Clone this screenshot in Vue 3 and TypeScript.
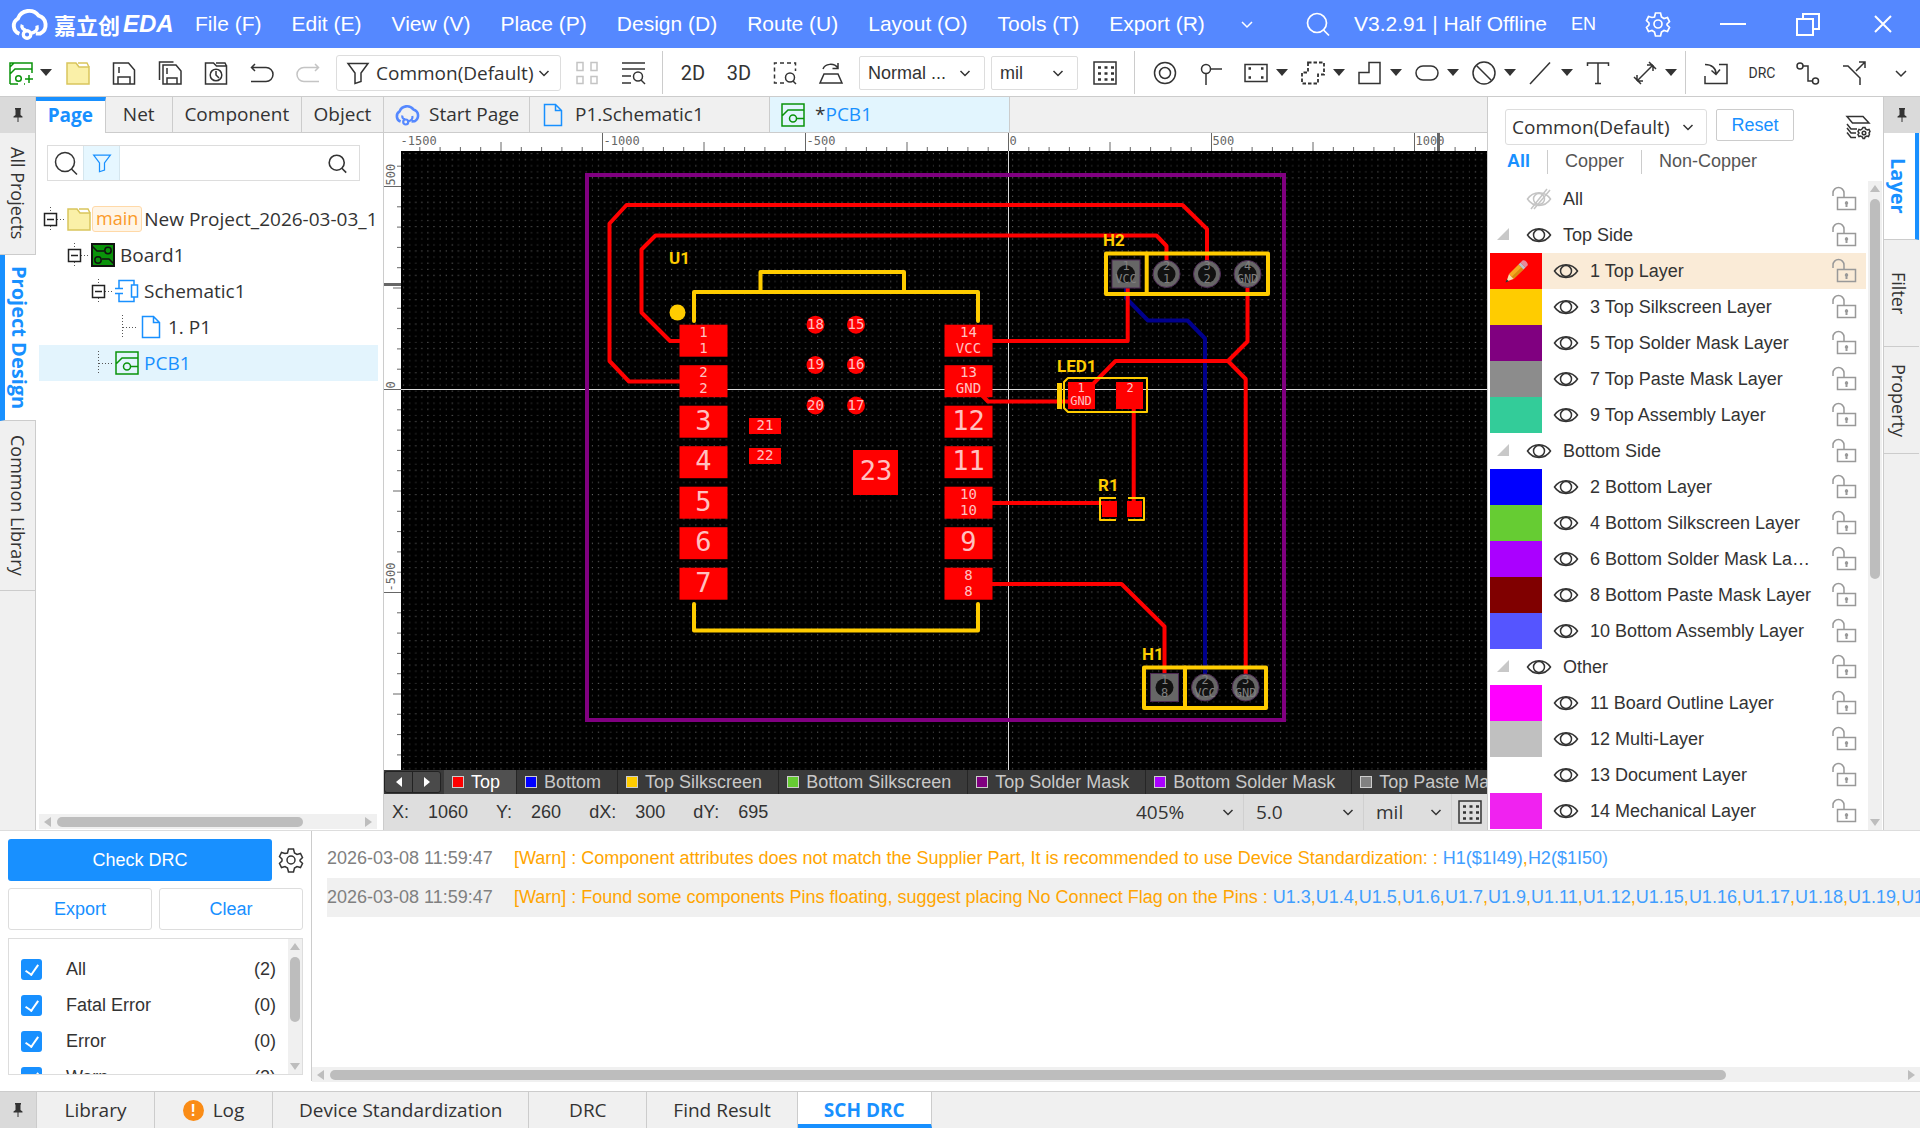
<script setup lang="ts">
import { h, ref } from 'vue'

const icons: Record<string, string> = {
  cloud: '<path stroke-width="2.600" d="M5.600 18.500A5.600 5.600 0 0 1 4.600 8.400A8 8 0 0 1 18.400 6.400A6.400 6.400 0 0 1 19.500 18.300L16.500 18.400"/><circle stroke-width="2.200" cx="10.700" cy="19" r="2.500"/><path stroke-width="2.200" d="M7.500 12.500a2.500 2.500 0 0 0 2.700 3.500M13 18.300c3.600-.7 5-2.600 4.300-5.300"/>',
  newpcb: '<path d="M1 23V6l4-4h18v10M1 13l5-5h17M1 23h8M1 23V2h22"/><circle cx="9.500" cy="17.500" r="2.800"/><path d="M15 23h1M20 14v8M16 18h8"/>',
  folder: '<path fill="#faf0a8" stroke="#d9c55c" d="M1 23V2h9l3 4h10v17z"/><path stroke="#d9c55c" d="M12 2h9l2 4"/>',
  save: '<path d="M1.500 2h15l6 7v14h-21zM6 23v-7h12v7M7 6v6"/>',
  saveall: '<path d="M1.500 19V1h14M5 4h13l5 6v13H5zM9 23v-6h10v6M9 7v6"/>',
  history: '<path d="M1.500 23V2h8l3 3h10v18zM12 2h9l1.500 3"/><circle cx="12" cy="14" r="5.800"/><path d="M12 10v4l3 3"/>',
  undo: '<path d="M5 3L1.500 6.500 5 10M1.500 6.500H16a7 7 0 0 1 0 14H1"/>',
  redo: '<path d="M19 3l3.500 3.500L19 10M22.500 6.500H8a7 7 0 0 0 0 14h15"/>',
  funnel: '<path d="M2 2.500h20l-7 9.500v8.500l-6 2V12z"/>',
  four: '<path d="M2 1.500h6v8H2zM16 1.500h6v8h-6zM2 15.500h6v7H2zM16 15.500h6v7h-6z"/>',
  find: '<path d="M1 2h23M1 8h23M1 15h9M1 22h9"/><circle cx="17" cy="15.500" r="4.500"/><path d="M20 19l4 4"/>',
  zoomsel: '<path stroke-dasharray="4 3" d="M11 22H1.500V2h21v8"/><circle cx="17" cy="16.500" r="4.500"/><path d="M20 20l3 3"/>',
  flip: '<path d="M5 13h14l4 9H1zM4 8c2-5.500 11-6.500 15-1M19 2v5.500h-5.500"/>',
  dots: '<path d="M1 1h22v22H1z"/><path stroke-width="2.400" stroke-dasharray="3 3.500" d="M5 6.500h16M5 12.500h16M5 18.500h16"/>',
  pad: '<circle cx="12" cy="12" r="10.500"/><circle cx="12" cy="12" r="5.500"/>',
  via: '<circle cx="7" cy="8" r="4.500"/><path d="M11.500 8H23M7 12.500V24"/>',
  rectpad: '<path d="M1 3.500h22v17H1z"/><path stroke-width="2.500" d="M4.500 7.500H7M17 7.500h2.500M4.500 16.500H7M17 16.500h2.500"/>',
  dashpoly: '<path stroke-width="1.800" stroke-dasharray="3.500 2" d="M7 1.500h16v12h-6v9H1v-11h6z"/>',
  poly: '<path d="M11 1.500h11v21H1v-11h10z"/>',
  round: '<rect x="1" y="5" width="22" height="14" rx="7"/>',
  ban: '<circle cx="12" cy="12" r="11"/><path d="M4.500 4.500l15 15"/>',
  line: '<path d="M1 23L21 1.500"/>',
  text: '<path d="M1.500 5V2h21v3M12 2v20.500M9 22.500h6"/>',
  dim: '<path d="M4 20L20 4M1 16l7 7M16 1l7 7M4 20v-6M4 20h6M20 4v6M20 4h-6"/>',
  import: '<path d="M1 15v7.500h22v-19h-8M1 3.500c7 0 11 4 11 9M7.500 9.500l4.500 4 4-5"/>',
  route: '<circle cx="4" cy="5" r="3"/><circle cx="19.500" cy="20" r="3"/><path d="M7 5h5v15h4.500"/>',
  fork: '<path d="M1 5h5l12 12v7M14 10l9-9M17 1h6v6"/>',
  search: '<circle cx="11" cy="11" r="9.500"/><path d="M17.500 18l5.500 5.500"/>',
  gear: '<circle cx="12" cy="12" r="4"/><path d="M9.500 1h5l1 4 2.500 1.500 3.500-1 2 4-2.500 2.500v1l2.500 2.500-2 4-3.500-1-2.500 1.500-1 4h-5l-1-4L6 18.500l-3.500 1-2-4L3 13v-2L.5 8.500l2-4 3.500 1L8.500 5z"/>',
  min: '<path stroke-width="2" d="M-1 12h26"/>',
  restore: '<path stroke-width="2" d="M1 7h16v16H1zM7 7V2h16v15h-6"/>',
  close: '<path stroke-width="2" d="M4 4l16 16M20 4L4 20"/>',
  down: '<path d="M7 10l5 5 5-5"/>',
  chev: '<path d="M7.500 10l4.500 4.500 4.500-4.500"/>',
  pin: '<path fill="currentColor" stroke="none" d="M9 5h6v1.500h-.5V12l2 1.500v1h-4V19h-1v-4.500h-4v-1l2-1.500V6.500H9z"/>',
  file: '<path d="M3.500 1.500h11l6 6v15h-17zM14.500 1.500v6h6"/>',
  pcb: '<path d="M1 1h22v22H1zM1 13l6-6h16"/><circle cx="12" cy="15.500" r="3.500"/><path d="M15.500 15.500H23"/>',
  board: '<rect x="1" y="1" width="22" height="22" fill="#0a930a" stroke="#111" stroke-width="2"/><g stroke="#111"><path d="M1 3l5 5h7M23 21l-5-5h-7"/><circle cx="17" cy="7.500" r="3.200"/><circle cx="7" cy="17" r="3.200"/></g>',
  sch: '<path d="M4 9V1.500h15V6M4 15v7.500h15V18M0 9.500h8M0 14.500h8M16.500 6h6v12h-6z"/>',
  eye: '<path d="M.5 12C6 3.500 18 3.500 23.500 12 18 20.500 6 20.500.5 12z"/><circle cx="12" cy="12" r="5.500"/>',
  eyeoff: '<path d="M.5 12C6 3.500 18 3.500 23.500 12 18 20.500 6 20.500.5 12z"/><circle cx="12" cy="12" r="5.500"/><path d="M4 22L20 2M7 22L23 3"/>',
  lock: '<path d="M5.500 10.500h18v12h-18zM1 9V6a5.500 5.500 0 0 1 11 0v4.500"/><path fill="currentColor" stroke="none" d="M14.500 14a2 2 0 0 1 1 3.500V20h-2v-2.500a2 2 0 0 1 1-3.500z"/>',
  layers: '<path d="M1 1.500h16l6 6.500H6.500zM1 9l4 5h6M1 13l4 5h5M1 17.500l4 5h5"/><circle cx="18" cy="18" r="1.800"/><path d="M17 12.500h2l.5 1.500 2 1 1.500-.5 1 2-1 1.500.5 1-1 2.500-1.500-.5-2 1-.5 1.500h-1.500l-.5-1.500-2-1-1.500.5-1-2 1-1.500-1-1.500 1-2 1.500.5 1.500-1z"/>',
  tri: '<path fill="#c8c8c8" stroke="none" d="M18 5v12H6z"/>',
  pencil: '<path fill="#f6a821" stroke="none" d="M5 15L14.500 5.500l5 5L9.500 20z"/><path fill="#d98a10" stroke="none" d="M7.500 18l10-9.800 2 2L9.500 20z"/><path fill="#e58a9a" stroke="none" d="M16.500 3.500l2-2c2-1.500 6.500 3 5 5l-2 2z"/><path fill="#b9c4cc" stroke="none" d="M14.500 5.500l2-2 5 5-2 2z"/><path fill="#f8deb0" stroke="none" d="M5 15l4.500 5-7 2.500z"/><path fill="#333" stroke="none" d="M1.500 23.500l1.200-3.300 2.100 2.100z"/>',
}
const Icon = (p: { name: string }) =>
  h('svg', { class: 'ic', viewBox: '0 0 24 24', innerHTML: icons[p.name], 'aria-hidden': 'true' })
Icon.props = ['name']

const menus = ['File (F)', 'Edit (E)', 'View (V)', 'Place (P)', 'Design (D)', 'Route (U)', 'Layout (O)', 'Tools (T)', 'Export (R)']
const fileTools = ['folder', 'save', 'saveall', 'history', 'undo', 'redo']
const drawTools = ['rectpad', 'dashpoly', 'poly', 'round', 'ban', 'line']

const treeNodes = [
  { level: 0, icon: 'folder', text: 'New Project_2026-03-03_1', tag: 'main', open: true },
  { level: 1, icon: 'board', text: 'Board1', open: true },
  { level: 2, icon: 'sch', text: 'Schematic1', open: true },
  { level: 3, icon: 'file', text: '1. P1' },
  { level: 2, icon: 'pcb', text: 'PCB1', active: true },
]

interface LayerRow { text: string; color?: string; kind: 'all' | 'group' | 'layer'; active?: boolean }
const layers: LayerRow[] = [
  { text: 'All', kind: 'all' },
  { text: 'Top Side', kind: 'group' },
  { text: '1 Top Layer', color: '#ff0000', kind: 'layer', active: true },
  { text: '3 Top Silkscreen Layer', color: '#ffcc00', kind: 'layer' },
  { text: '5 Top Solder Mask Layer', color: '#800080', kind: 'layer' },
  { text: '7 Top Paste Mask Layer', color: '#8c8c8c', kind: 'layer' },
  { text: '9 Top Assembly Layer', color: '#33cc99', kind: 'layer' },
  { text: 'Bottom Side', kind: 'group' },
  { text: '2 Bottom Layer', color: '#0000ff', kind: 'layer' },
  { text: '4 Bottom Silkscreen Layer', color: '#66cc33', kind: 'layer' },
  { text: '6 Bottom Solder Mask Layer', color: '#aa00ff', kind: 'layer' },
  { text: '8 Bottom Paste Mask Layer', color: '#800000', kind: 'layer' },
  { text: '10 Bottom Assembly Layer', color: '#5555ff', kind: 'layer' },
  { text: 'Other', kind: 'group' },
  { text: '11 Board Outline Layer', color: '#ff00ff', kind: 'layer' },
  { text: '12 Multi-Layer', color: '#c0c0c0', kind: 'layer' },
  { text: '13 Document Layer', color: '#ffffff', kind: 'layer' },
  { text: '14 Mechanical Layer', color: '#f022f0', kind: 'layer' },
]

const layerTabs = [
  { text: 'Top', color: '#ff0000' },
  { text: 'Bottom', color: '#0000ff' },
  { text: 'Top Silkscreen', color: '#ffcc00' },
  { text: 'Bottom Silkscreen', color: '#66cc33' },
  { text: 'Top Solder Mask', color: '#800080' },
  { text: 'Bottom Solder Mask', color: '#aa00ff' },
  { text: 'Top Paste Mask', color: '#808080' },
]

const coords = [['X:', '1060'], ['Y:', '260'], ['dX:', '300'], ['dY:', '695']]

const filters = ref([
  { text: 'All', count: 2, on: true },
  { text: 'Fatal Error', count: 0, on: true },
  { text: 'Error', count: 0, on: true },
  { text: 'Warn', count: 2, on: true },
])

const logs = [
  { msg: '[Warn] : Component attributes does not match the Supplier Part, It is recommended to use Device Standardization: : ', links: ['H1($1I49)', 'H2($1I50)'] },
  { msg: '[Warn] : Found some components Pins floating, suggest placing No Connect Flag on the Pins : ', links: [3, 4, 5, 6, 7, 9, 11, 12, 15, 16, 17, 18, 19, 20, 21].map(n => `U1.${n}`) },
]

/* rulers: 500 mil is 203 px, the origin sits at 1008,389 */
const step = 20.3
const hTicks = Array.from({ length: 54 }, (_, k) => k - 30).map(i => ({ p: 1008.5 + i * step, l: i % 10 === 0 ? 18 : i % 5 === 0 ? 9 : 4, v: i * 50 }))
const vTicks = Array.from({ length: 31 }, (_, k) => k - 11).map(i => ({ p: 389.5 + i * step, l: i % 10 === 0 ? 17 : i % 5 === 0 ? 8 : 4, v: -i * 50 }))

const padY = (i: number) => 324.700 + i * 40.500
const leftPads = [['1', '1'], ['2', '2'], ['3'], ['4'], ['5'], ['6'], ['7']]
const rightPads = [['14', 'VCC'], ['13', 'GND'], ['12'], ['11'], ['10', '10'], ['9'], ['8', '8']]
const modulePads = [
  ...leftPads.map((t, i) => ({ x: 679.500, y: padY(i), t })),
  ...rightPads.map((t, i) => ({ x: 944.500, y: padY(i), t })),
]
const dotsPads = [[815.500, 324.700, '18'], [856, 324.700, '15'], [815.500, 365, '19'], [856, 365, '16'], [815.500, 405.500, '20'], [856, 405.500, '17']] as const
const holes = [
  { x: 1126, y: 274, sq: true, t: ['1', 'VCC'] },
  { x: 1166.500, y: 274, t: ['2', '1'] },
  { x: 1207, y: 274, t: ['3', '2'] },
  { x: 1247.500, y: 274, t: ['4', 'GND'] },
  { x: 1164.500, y: 687.500, sq: true, t: ['1', '8'] },
  { x: 1205, y: 687.500, t: ['2', 'VCC'] },
  { x: 1245.700, y: 687.500, t: ['3', 'GND'] },
]
</script>

<template>
  <div class="app">
    <header class="menubar">
      <div class="brand">
        <Icon name="cloud" />
        <span class="brand-cn">嘉立创</span><span class="brand-en">EDA</span>
      </div>
      <nav class="menus">
        <button v-for="m in menus" :key="m">{{ m }}</button>
        <button aria-label="More"><Icon name="down" /></button>
      </nav>
      <div class="win">
        <button aria-label="Search"><Icon name="search" /></button>
        <span class="ver">V3.2.91 | Half Offline</span>
        <button class="wbtn lang">EN</button>
        <button class="wbtn" aria-label="Settings"><Icon name="gear" /></button>
        <button class="wbtn" aria-label="Minimize"><Icon name="min" /></button>
        <button class="wbtn" aria-label="Restore"><Icon name="restore" /></button>
        <button class="wbtn" aria-label="Close"><Icon name="close" /></button>
      </div>
    </header>

    <div class="toolbar">
      <button class="caret green" aria-label="New"><Icon name="newpcb" /><i class="car"></i></button>
      <div class="tools">
        <button v-for="t in fileTools" :key="t" :class="{ dis: t === 'redo' }" :aria-label="t"><Icon :name="t" /></button>
      </div>
      <label class="dd dd-filter">
        <Icon name="funnel" />
        <select aria-label="Filter"><option>Common(Default)</option></select>
        <Icon name="chev" class="arr" />
      </label>
      <div class="tools">
        <button class="dis" aria-label="Array"><Icon name="four" /></button>
        <button aria-label="Find"><Icon name="find" /></button>
      </div>
      <i class="sep"></i>
      <div class="tools">
        <button class="dimtext">2D</button>
        <button class="dimtext">3D</button>
        <button aria-label="Zoom"><Icon name="zoomsel" /></button>
        <button aria-label="Flip"><Icon name="flip" /></button>
      </div>
      <label class="dd dd-mode"><select aria-label="Mode"><option>Normal ...</option></select><Icon name="chev" class="arr" /></label>
      <label class="dd dd-unit"><select aria-label="Unit"><option>mil</option></select><Icon name="chev" class="arr" /></label>
      <button class="gridbtn" aria-label="Grid"><Icon name="dots" /></button>
      <i class="sep"></i>
      <div class="tools">
        <button aria-label="Pad"><Icon name="pad" /></button>
        <button aria-label="Via"><Icon name="via" /></button>
      </div>
      <div class="shapes">
        <button v-for="t in drawTools" :key="t" class="caret" :aria-label="t"><Icon :name="t" /><i class="car"></i></button>
      </div>
      <div class="tools">
        <button aria-label="Text"><Icon name="text" /></button>
        <button class="caret" aria-label="Dimension"><Icon name="dim" /><i class="car"></i></button>
      </div>
      <i class="sep last"></i>
      <div class="tools">
        <button aria-label="Import"><Icon name="import" /></button>
        <button class="drc">DRC</button>
        <button aria-label="Route"><Icon name="route" /></button>
        <button aria-label="Fork"><Icon name="fork" /></button>
      </div>
      <button class="more" aria-label="More tools"><Icon name="down" /></button>
    </div>

    <main class="main">
      <aside class="rail left">
        <button class="pin" aria-label="Pin"><Icon name="pin" /></button>
        <button class="vt a">All Projects</button>
        <button class="vt b on">Project Design</button>
        <button class="vt c">Common Library</button>
      </aside>

      <section class="project">
        <nav class="ptabs">
          <button class="on">Page</button><button>Net</button><button>Component</button><button>Object</button>
        </nav>
        <div class="searchbox">
          <button aria-label="Find"><Icon name="search" /></button>
          <button class="flt" aria-label="Filter"><Icon name="funnel" /></button>
          <input type="text" aria-label="Search project" />
          <button class="go" aria-label="Go"><Icon name="search" /></button>
        </div>
        <ul class="tree">
          <li v-for="n in treeNodes" :key="n.text" :class="{ act: n.active }" :style="{ paddingLeft: 4 + n.level * 24 + 'px' }">
            <svg class="exp" viewBox="0 0 22 24">
              <template v-if="n.open">
                <path class="dot" d="M7.500 0v6M7.500 19v5M14 12.500h7" />
                <path class="box" d="M1.500 6.500h12v12h-12zM4 12.500h7" />
              </template>
              <path v-else class="dot" d="M7.500 0v24M8 12.500h13" />
            </svg>
            <Icon :name="n.icon" :class="n.icon" />
            <span v-if="n.tag" class="tag">{{ n.tag }}</span>
            <span class="lbl" :class="{ tagged: n.tag }">{{ n.text }}</span>
          </li>
        </ul>
        <div class="hscroll"><i class="al"></i><b></b><i class="ar"></i></div>
      </section>

      <section class="editor">
        <nav class="docs">
          <button class="start"><Icon name="cloud" /><span>Start Page</span></button>
          <button class="sheet"><Icon name="file" /><span>P1.Schematic1</span></button>
          <button class="board on"><Icon name="pcb" /><span>*<em>PCB1</em></span></button>
        </nav>
        <svg class="stage">
          <defs>
            <pattern id="grid" x="401" y="151" width="24.360" height="24.360" patternUnits="userSpaceOnUse">
              <template v-for="r in 4" :key="r">
                <rect v-for="c in 4" :key="c" :x="c * 6.090 - 4" :y="r * 6.090 - 4" width="1" height="1" :fill="c === 1 || r === 1 ? '#808080' : '#505050'" />
              </template>
            </pattern>
          </defs>
          <g transform="translate(-384 -133)">
            <g class="ruler">
              <template v-for="t in hTicks" :key="t.v">
                <path :d="`M${t.p} ${151 - t.l}V151`" />
                <text v-if="t.l === 18" :x="t.p + 1" y="145">{{ t.v }}</text>
              </template>
              <template v-for="t in vTicks" :key="t.v">
                <path :d="`M${401 - t.l} ${t.p}H401`" />
                <text v-if="t.l === 17" :transform="`translate(395 ${t.p - 1}) rotate(-90)`">{{ t.v }}</text>
              </template>
              <path class="cur" d="M1438.500 133v18M384 284.500h17" />
            </g>
            <rect x="384" y="133" width="17" height="18" fill="#fff" />
            <rect x="401" y="151" width="100%" height="100%" fill="#000" />
            <rect x="401" y="151" width="100%" height="100%" fill="url(#grid)" />
            <path class="axis" d="M1008.500 151v700M401 389.500h3000" />

            <path class="trk bot" d="M1126 288v10L1148 320.500H1187.500L1205 338.500V675" />
            <rect class="outline" x="587" y="175" width="697" height="545" />
            <g class="trk">
              <path d="M680 381.500H629L609.500 361V223.500L626.500 205H1182.500L1207 229V262" />
              <path d="M680 341H670L641.500 312.500V249.500L655.500 235.500H1156.500L1166.500 246V262" />
              <path d="M992 341H1127.700V286" />
              <path d="M1247.500 286V341.500L1228 361L1245.700 379V676" />
              <path d="M1228 361H1115.500L1092 385" />
              <path d="M978 391L988 401.500H1070" />
              <path d="M1133.700 400V506" />
              <path d="M992 503H1106" />
              <path d="M992 584H1121.500L1164.500 626.500V676" />
            </g>
            <g class="silk">
              <path d="M694 321V292H978V321M760.500 292V272H904V292M694 604V630.500H978V604" />
              <rect x="1106" y="253.500" width="162" height="40.500" />
              <path d="M1146.700 253.500V294M1185 667.500V708" />
              <rect x="1144" y="667.500" width="122" height="40.500" />
            </g>
            <circle cx="677.500" cy="312.500" r="8" fill="#fc0" />
            <g class="pads">
              <template v-for="p in modulePads" :key="`${p.x}-${p.y}`">
                <rect :x="p.x" :y="p.y" width="48" height="32" />
                <text v-if="p.t.length === 1" class="big" :x="p.x + 24" :y="p.y + 24">{{ p.t[0] }}</text>
                <template v-else>
                  <text :x="p.x + 24" :y="p.y + 12">{{ p.t[0] }}</text>
                  <text :x="p.x + 24" :y="p.y + 28">{{ p.t[1] }}</text>
                </template>
              </template>
              <template v-for="d in dotsPads" :key="d[2]">
                <circle :cx="d[0]" :cy="d[1]" r="9" />
                <text :x="d[0]" :y="d[1] + 4">{{ d[2] }}</text>
              </template>
              <rect x="749" y="418" width="32" height="16" /><text x="765" y="430">21</text>
              <rect x="749" y="448" width="32" height="16" /><text x="765" y="460">22</text>
              <rect x="853" y="450" width="45" height="45" /><text class="big" x="876" y="480">23</text>
              <rect x="1068" y="382" width="27" height="27" />
              <rect x="1116" y="382" width="27" height="27" />
              <text class="sm" x="1081" y="392">1</text><text class="sm" x="1081" y="405">GND</text>
              <text class="sm" x="1130" y="392">2</text>
              <path d="M1102 501h15v16h-15zM1127 501h15v16h-15z" />
            </g>
            <g class="silk thin">
              <path d="M1068 378H1147V412H1068L1064 408V382z" />
              <path d="M1116 498H1100V520H1116M1128 498H1144V520H1128" />
            </g>
            <path d="M1057 383h5v26h-5z" fill="#fc0" />
            <g class="holes">
              <template v-for="o in holes" :key="`${o.x}-${o.y}`">
                <rect v-if="o.sq" :x="o.x - 14" :y="o.y - 14" width="28" height="28" />
                <circle v-else :cx="o.x" :cy="o.y" r="13.500" />
                <circle class="hole" :cx="o.x" :cy="o.y" r="9" />
                <text :x="o.x" :y="o.y - 4">{{ o.t[0] }}</text>
                <text :x="o.x" :y="o.y + 9">{{ o.t[1] }}</text>
              </template>
            </g>
            <g class="names">
              <text x="669" y="264">U1</text><text x="1103" y="246">H2</text><text x="1057" y="372">LED1</text>
              <text x="1098" y="491">R1</text><text x="1142" y="660">H1</text>
            </g>
          </g>
        </svg>
        <div class="ltabs">
          <div class="nav"><button aria-label="Previous"><i class="pl"></i></button><button aria-label="Next"><i class="pr"></i></button></div>
          <button v-for="(t, i) in layerTabs" :key="t.text" class="lt" :class="{ on: i === 0 }"><i :style="{ background: t.color }"></i>{{ t.text }}</button>
        </div>
        <div class="status">
          <dl><div v-for="c in coords" :key="c[0]"><dt>{{ c[0] }}</dt><dd>{{ c[1] }}</dd></div></dl>
          <label class="dd wide"><select aria-label="Zoom level"><option>405%</option></select><Icon name="chev" class="arr" /></label>
          <label class="dd wide"><select aria-label="Grid size"><option>5.0</option></select><Icon name="chev" class="arr" /></label>
          <label class="dd"><select aria-label="Canvas unit"><option>mil</option></select><Icon name="chev" class="arr" /></label>
          <button aria-label="Grid"><Icon name="dots" /></button>
        </div>
      </section>

      <section class="layerpanel">
        <div class="lhead">
          <label class="dd"><select aria-label="Layer preset"><option>Common(Default)</option></select><Icon name="chev" class="arr" /></label>
          <button class="reset">Reset</button>
          <button class="mgr" aria-label="Layer manager"><Icon name="layers" /></button>
        </div>
        <nav class="lfilter"><button class="on">All</button><button>Copper</button><button>Non-Copper</button></nav>
        <div class="lbody">
          <ul>
            <li v-for="l in layers" :key="l.text" :class="[l.kind, { act: l.active }]">
              <span v-if="l.kind === 'layer'" class="sw" :style="{ background: l.color }"><Icon v-if="l.active" name="pencil" /></span>
              <span v-else class="tri"><Icon v-if="l.kind === 'group'" name="tri" /></span>
              <Icon :name="l.kind === 'all' ? 'eyeoff' : 'eye'" class="eye" />
              <span class="nm">{{ l.text }}</span>
              <Icon name="lock" class="lock" />
            </li>
          </ul>
          <div class="vscroll"><i class="au"></i><b></b><i class="ad"></i></div>
        </div>
      </section>

      <aside class="rail right">
        <button class="pin" aria-label="Pin"><Icon name="pin" /></button>
        <button class="vt on">Layer</button>
        <button class="vt">Filter</button>
        <button class="vt">Property</button>
      </aside>
    </main>

    <section class="drcpanel">
      <div class="ctrl">
        <div class="r1"><button class="check">Check DRC</button><button class="cfg" aria-label="Settings"><Icon name="gear" /></button></div>
        <div class="r2"><button>Export</button><button>Clear</button></div>
        <div class="fbox">
          <div class="flist">
            <label v-for="f in filters" :key="f.text">
              <input v-model="f.on" type="checkbox" /><span>{{ f.text }}</span><span class="cnt">({{ f.count }})</span>
            </label>
          </div>
          <div class="vscroll"><i class="au"></i><b></b><i class="ad"></i></div>
        </div>
      </div>
      <div class="log">
        <div class="lines">
          <p v-for="(l, i) in logs" :key="i">
            <time>2026-03-08 11:59:47</time>
            <span class="msg">{{ l.msg }}<template v-for="(k, j) in l.links" :key="k"><template v-if="j">,</template><a href="#">{{ k }}</a></template></span>
          </p>
        </div>
        <div class="hscroll"><i class="al"></i><b></b><i class="ar"></i></div>
      </div>
    </section>

    <footer class="btabs">
      <button class="pin" aria-label="Pin"><Icon name="pin" /></button>
      <button>Library</button>
      <button><span class="warn">!</span>Log</button>
      <button>Device Standardization</button>
      <button>DRC</button>
      <button>Find Result</button>
      <button class="on">SCH DRC</button>
    </footer>
  </div>
</template>

<style>
body { margin: 0; overflow: hidden; }
</style>

<style scoped>
.app { height: 100vh; display: flex; flex-direction: column; background: #fff; color: #333; font: 18px/24px "Liberation Sans", Arial, sans-serif; --ui: "Open Sans", "Noto Sans", sans-serif; --blue: #1890ff; }
* { box-sizing: border-box; }
button { border: 0; background: none; padding: 0; margin: 0; font: inherit; color: inherit; white-space: nowrap; cursor: pointer; }
ul, dl, dd, p { margin: 0; padding: 0; list-style: none; }
.ic { display: block; width: 24px; height: 24px; flex: none; fill: none; stroke: currentColor; stroke-width: 1.5; overflow: visible; }

.menubar { flex: none; height: 48px; display: flex; align-items: center; background: #5588ff; color: #fff; font-size: 21px; padding-left: 11px; }
.brand { display: flex; align-items: center; width: 184px; height: 48px; }
.brand .ic { width: 36px; height: 36px; margin-right: 7px; }
.brand-cn { font: 700 22px/32px "Noto Sans CJK SC", sans-serif; }
.brand-en { font: italic 700 24px/32px "Liberation Sans", sans-serif; margin-left: 3px; }
.menus { display: flex; gap: 30px; align-items: center; }
.win { margin-left: auto; display: flex; align-items: center; }
.win .ic { stroke-width: 1.7; }
.ver { margin-left: 24px; }
.wbtn { width: 75px; display: flex; justify-content: center; }
.wbtn.lang { width: 73px; font-size: 18px; }

.toolbar { flex: none; height: 49px; display: flex; align-items: center; border-bottom: 1px solid #ccc; padding: 1px 0 0 9px; }
.tools { display: flex; gap: 22px; align-items: center; }
.shapes { display: flex; gap: 13px; margin: 0 13px 0 21px; }
.shapes + .tools { gap: 23px; }
.caret { display: flex; align-items: center; gap: 8px; }
.toolbar > .caret { margin-right: 14px; gap: 7px; }
.green .ic { color: #0a930a; }
.car { border: 6px solid transparent; border-top: 7px solid #333; border-bottom: 0; }
.dis { color: #c4c4c4; }
.sep { width: 1px; height: 43px; background: #ccc; margin: 0 18px 0 17px; flex: none; }
.sep.last { margin-left: 8px; }
.dimtext { width: 24px; font: 20px/24px Roboto, sans-serif; display: flex; justify-content: center; }
.drc { width: 24px; font: 14px/24px Roboto, sans-serif; display: flex; justify-content: center; }
.more { margin: 0 7px 0 auto; }
.dd { display: flex; align-items: center; position: relative; }
.dd select { appearance: none; border: 0; background: transparent; font: 19px/26px var(--ui); color: inherit; padding: 0; width: 100%; outline: 0; }
.dd .arr { position: absolute; right: 4px; pointer-events: none; }
.toolbar .dd { border: 1px solid #ddd; border-radius: 2px; height: 34px; padding-left: 8px; }
.toolbar .dd-filter { width: 225px; height: 36px; margin: 0 14px 0 16px; padding-left: 9px; gap: 6px; border-radius: 3px; }
.dd-mode { width: 126px; margin: 0 6px 0 16px; }
.dd-unit { width: 87px; }
.dd-mode select, .dd-unit select { font: 18px/24px "Liberation Sans", sans-serif; }
.toolbar .dd-mode .arr, .toolbar .dd-unit .arr { right: 7px; }
.gridbtn { margin-left: 15px; }

.main { flex: 1; min-height: 0; display: flex; border-bottom: 1px solid #ddd; }
.rail { flex: none; width: 36px; background: #f0f0f0; display: flex; flex-direction: column; border-right: 1px solid #ccc; font-family: var(--ui); }
.rail.right { width: 37px; border-left: 1px solid #ccc; border-right: 0; }
.pin { background: #dadada; height: 36px; display: flex; align-items: center; justify-content: center; }
.vt { writing-mode: vertical-rl; width: 35px; border-bottom: 1px solid #ccc; font-size: 18px; line-height: 24px; display: flex; align-items: center; justify-content: center; }
.vt.a { height: 122px; }
.vt.b { height: 166px; }
.vt.c { height: 170px; }
.vt.on { background: #fff; color: var(--blue); font-weight: 700; font-size: 20px; }
.left .on { border-left: 5px solid var(--blue); width: 36px; padding-right: 4px; }
.right .vt { height: 107px; padding-right: 6px; }
.right .on { border-right: 4px solid var(--blue); padding-right: 3px; }

.project { flex: none; width: 348px; display: flex; flex-direction: column; border-right: 1px solid #ccc; min-width: 0; font-family: var(--ui); }
.ptabs { display: flex; height: 36px; background: #f0f0f0; font-size: 19px; }
.ptabs button { border-right: 1px solid #ccc; border-bottom: 1px solid #ccc; flex: 1 1 auto; min-width: 67px; padding: 0 10px 2px; }
.ptabs button:last-child { border-right: 0; }
.ptabs .on { background: #fff; color: var(--blue); font-weight: 700; border-top: 4px solid var(--blue); border-bottom: 0; padding-bottom: 4px; }
.searchbox { display: flex; margin: 12px 23px 20px 11px; height: 36px; border: 1px solid #ddd; }
.searchbox button { width: 35px; display: flex; align-items: center; justify-content: center; }
.searchbox .flt { width: 37px; background: #e6f7ff; color: var(--blue); border: solid #d5e6ee; border-width: 0 1px; }
.searchbox .flt .ic { width: 20px; height: 22px; }
.searchbox .go { width: 44px; }
.searchbox .go .ic { width: 19px; height: 19px; stroke-width: 2; }
.searchbox input { flex: 1; min-width: 0; border: 0; outline: 0; background: transparent; }
.tree { flex: 1; margin: 0 5px 0 3px; overflow: hidden; }
.tree li { height: 36px; display: flex; align-items: center; white-space: nowrap; font-size: 19px; }
.exp { width: 22px; height: 24px; margin-right: 2px; flex: none; fill: none; }
.dot { stroke: #555; stroke-dasharray: 1 2; }
.box { stroke: #222; stroke-width: 1.5; }
.tree .act { background: #e3f4fd; color: var(--blue); }
.file, .sch { color: var(--blue); }
.pcb { color: #0a930a; }
.lbl { margin-left: 5px; padding-bottom: 1px; }
.lbl.tagged { margin-left: 2px; }
.tag { margin-left: 1px; height: 26px; padding: 0 3px; border: 1px solid #ffd9a8; background: #fff5e6; color: #fa9a2a; border-radius: 3px; line-height: 22px; font-size: 18px; }

.hscroll { flex: none; height: 15px; background: #f0f0f0; display: flex; align-items: center; padding: 0 5px; }
.hscroll b { height: 10px; border-radius: 5px; background: #bdbdbd; }
.al, .ar { border: 5px solid transparent; }
.al { border-left: 0; border-right: 7px solid #bdbdbd; }
.ar { border-right: 0; border-left: 7px solid #bdbdbd; margin-left: auto; }
.project .hscroll { margin: 0 6px 1px 3px; }
.project .hscroll b { width: 246px; margin-left: 6px; }
.vscroll { flex: none; width: 14px; background: #f0f0f0; display: flex; flex-direction: column; align-items: center; padding: 4px 0; }
.vscroll b { width: 10px; border-radius: 5px; background: #bdbdbd; margin-top: 7px; }
.au, .ad { border: 5px solid transparent; }
.au { border-top: 0; border-bottom: 7px solid #bdbdbd; }
.ad { border-bottom: 0; border-top: 7px solid #bdbdbd; margin-top: auto; }

.editor { flex: 1; min-width: 0; display: flex; flex-direction: column; }
.docs { flex: none; height: 36px; background: #f0f0f0; display: flex; font: 19px/24px var(--ui); border-bottom: 1px solid #ccc; }
.docs button { display: flex; align-items: center; gap: 10px; padding-left: 11px; border-right: 1px solid #ccc; }
.docs button span { padding-bottom: 2px; }
.docs .start { width: 146px; }
.docs .start .ic { color: #5588ff; }
.docs .sheet, .docs .board { width: 240px; }
.docs .sheet .ic { color: var(--blue); }
.docs .board .ic { color: #0a930a; }
.docs .on { background: #e2f5fe; }
.docs em { font-style: normal; color: var(--blue); }
.stage { flex: 1; min-height: 0; width: 100%; display: block; background: #fff; overflow: hidden; }
.ruler path { stroke: #666; fill: none; }
.ruler .cur { stroke-width: 3; }
.ruler text { font: 12px "DejaVu Sans Mono", monospace; fill: #666; }
.axis { stroke: #ddd; fill: none; }
.trk { stroke: #f00; stroke-width: 4; fill: none; stroke-linejoin: round; }
.trk.bot { stroke: #00008b; }
.outline { stroke: #800080; stroke-width: 4; fill: none; }
.silk { stroke: #fc0; stroke-width: 4; fill: none; stroke-linecap: round; stroke-linejoin: round; }
.silk.thin { stroke-width: 2; stroke-linecap: butt; }
.pads { fill: #f00; }
.pads text { font: 14px "DejaVu Sans Mono", monospace; fill: #ffc0c0; text-anchor: middle; }
.pads .big { font-size: 27px; }
.pads .sm { font-size: 12px; }
.holes { fill: #666; stroke: #4d2a55; stroke-width: 1; }
.holes .hole { fill: #111; stroke: none; }
.holes text { font: 12px "DejaVu Sans Mono", monospace; fill: #808080; stroke: none; text-anchor: middle; }
.names { font: 700 17px Roboto, sans-serif; fill: #fc0; }

.ltabs { flex: none; height: 24px; background: #3a3a3a; display: flex; overflow: hidden; color: #c8c8c8; }
.ltabs .nav { flex: none; display: flex; width: 57px; margin: 1px 3px 1px 0; border: 1px solid #222; background: #4a4a4a; border-radius: 3px; }
.nav button { flex: 1; display: flex; align-items: center; justify-content: center; }
.nav button + button { border-left: 1px solid #222; }
.pl, .pr { border: 5px solid transparent; }
.pl { border-left: 0; border-right: 6px solid #fff; }
.pr { border-right: 0; border-left: 6px solid #fff; }
.lt { flex: none; display: flex; align-items: center; padding: 0 16px 0 8px; border-right: 1px solid #262626; line-height: 24px; }
.lt i { width: 12px; height: 12px; border: 1px solid #ccc; margin-right: 7px; }
.lt.on { background: #505050; color: #fff; }
.status { flex: none; height: 36px; background: #dedede; display: flex; align-items: center; padding: 0 5px 0 8px; }
.status dl { display: flex; gap: 28px; flex: 1; }
.status dl div { display: flex; gap: 19px; }
.status .dd { width: 88px; height: 36px; border-right: 1px solid #d0d0d0; padding-left: 12px; }
.status .wide { width: 120px; }
.status .dd .arr { right: 3px; }
.status button { margin-left: 6px; }

.layerpanel { flex: none; width: 396px; display: flex; flex-direction: column; border-left: 1px solid #ccc; }
.lhead { display: flex; align-items: center; padding: 12px 13px 0 17px; }
.lhead .dd { width: 202px; height: 36px; border: 1px solid #ddd; border-radius: 3px; padding-left: 6px; }
.lhead .dd .arr { right: 6px; }
.reset { width: 78px; height: 32px; border: 1px solid #ccc; border-radius: 2px; color: var(--blue); margin-left: 9px; margin-bottom: 4px; }
.mgr { margin-left: auto; }
.lfilter { display: flex; height: 36px; padding: 5px 0 7px 2px; color: #555; }
.lfilter button { padding: 0 17px 2px; border-right: 1px solid #ccc; line-height: 22px; }
.lfilter button:last-child { border: 0; }
.lfilter .on { color: var(--blue); font-weight: 700; }
.lbody { flex: 1; min-height: 0; display: flex; }
.lbody ul { flex: 1; min-width: 0; overflow: hidden; padding-left: 2px; }
.lbody li { height: 36px; display: flex; align-items: center; padding-right: 10px; }
.sw { width: 52px; height: 36px; flex: none; margin-right: 12px; display: flex; align-items: center; justify-content: center; }
.tri { width: 37px; flex: none; display: flex; }
.tri .ic { margin-left: 1px; }
.lbody .act { background: #faebd7; }
.eye { margin-right: 12px; }
.all .eye { color: #c4c4c4; }
.nm { flex: 1; overflow: hidden; text-overflow: ellipsis; white-space: nowrap; margin-right: 20px; }
.lock { color: #999; }
.lbody .vscroll { margin: 0 1px 0 2px; }
.lbody .vscroll b { height: 380px; }

.drcpanel { flex: none; height: 261px; display: flex; border-bottom: 1px solid #ccc; }
.ctrl { flex: none; width: 312px; border-right: 1px solid #ccc; padding: 8px 8px 0; margin-bottom: 10px; }
.r1, .r2 { display: flex; align-items: center; gap: 7px; margin-bottom: 7px; }
.check { flex: 1; height: 42px; background: var(--blue); color: #fff; border-radius: 3px; }
.r2 button { flex: 1; height: 42px; border: 1px solid #ddd; border-radius: 3px; color: var(--blue); }
.fbox { display: flex; height: 137px; border: 1px solid #ddd; overflow: hidden; margin-top: 8px; }
.flist { flex: 1; padding: 12px 12px 0; overflow: hidden; }
.flist label { height: 36px; display: flex; align-items: center; }
.flist input { appearance: none; width: 21px; height: 21px; margin: 0 24px 0 0; border-radius: 3px; background: var(--blue); position: relative; }
.flist input:checked::after { content: ""; position: absolute; left: 7px; top: 3px; width: 6px; height: 11px; border: solid #fff; border-width: 0 2px 2px 0; transform: rotate(35deg); }
.cnt { margin-left: auto; }
.fbox .vscroll b { height: 65px; }
.log { flex: 1; min-width: 0; display: flex; flex-direction: column; padding-bottom: 9px; }
.lines { flex: 1; padding: 8px 0 0 15px; overflow: hidden; }
.lines p { height: 39px; line-height: 38px; white-space: nowrap; overflow: hidden; }
.lines p:nth-child(even) { background: #f0f0f0; }
time { color: #808080; display: inline-block; width: 187px; }
.msg { color: #ffa500; white-space: pre; }
.msg a { color: #409eff; text-decoration: none; }
.log .hscroll b { flex: 1; margin: 0 182px 0 6px; }
.log .hscroll .ar { margin-left: 0; }

.btabs { flex: none; height: 36px; display: flex; background: #f0f0f0; font: 19px/24px var(--ui); }
.btabs button { min-width: 118px; padding: 0 26px; border-right: 1px solid #ccc; display: flex; align-items: center; justify-content: center; }
.btabs .pin { min-width: 37px; width: 37px; padding: 0; }
.btabs .on { background: #fff; color: var(--blue); font-weight: 700; border-bottom: 4px solid var(--blue); padding-top: 3px; }
.warn { width: 21px; height: 21px; border-radius: 50%; background: #fa8c16; color: #fff; font: 700 16px/21px "Liberation Sans", sans-serif; text-align: center; margin-right: 9px; }
</style>
